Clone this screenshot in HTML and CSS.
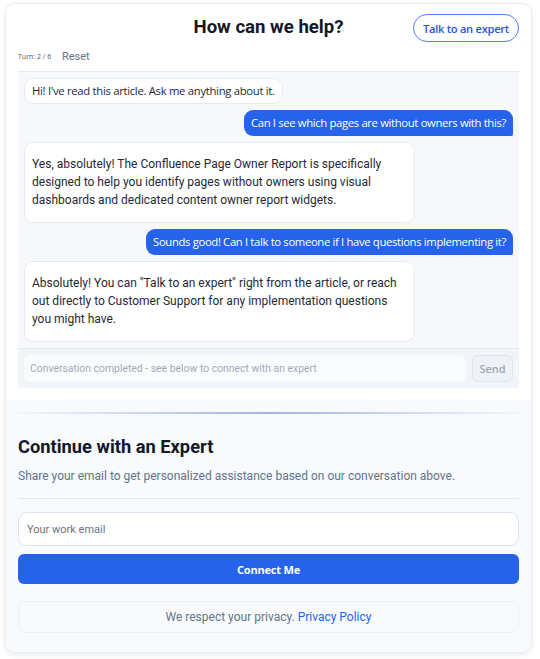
FILE: index.html
```html
<!DOCTYPE html>
<html>
<head>
<meta charset="utf-8">
<link rel="stylesheet" href="styles.css">
</head>
<body>
<div class="card">
  <div class="top">
    <div class="header">
      <h1 class="title">How can we help?</h1>
      <button class="expert-btn">Talk to an expert</button>
    </div>
    <div class="meta">
      <span class="turn">Turn: 2 / 6</span>
      <span class="reset">Reset</span>
    </div>
    <div class="chat">
      <div class="messages">
        <div class="msg bot short">Hi! I've read this article. Ask me anything about it.</div>
        <div class="msg user">Can I see which pages are without owners with this?</div>
        <div class="msg bot long">Yes, absolutely! The Confluence Page Owner Report is specifically designed to help you identify pages without owners using visual dashboards and dedicated content owner report widgets.</div>
        <div class="msg user">Sounds good! Can I talk to someone if I have questions implementing it?</div>
        <div class="msg bot long">Absolutely! You can "Talk to an expert" right from the article, or reach out directly to Customer Support for any implementation questions you might have.</div>
      </div>
      <div class="composer">
        <div class="composer-input">Conversation completed - see below to connect with an expert</div>
        <div class="send">Send</div>
      </div>
    </div>
  </div>
  <div class="bottom">
    <div class="glow-line"></div>
    <h2 class="cta-title">Continue with an Expert</h2>
    <p class="cta-sub">Share your email to get personalized assistance based on our conversation above.</p>
    <div class="divider"></div>
    <div class="email">Your work email</div>
    <button class="connect">Connect Me</button>
    <div class="privacy">We respect your privacy. <span class="link">Privacy Policy</span></div>
  </div>
</div>
</body>
</html>
```

FILE: styles.css
```css
* { box-sizing: border-box; }
html, body { margin: 0; padding: 0; background: #ffffff; }
body {
  font-family: Roboto, "Liberation Sans", sans-serif;
  color: #1e293b;
  padding: 3px 8px 7px 5px;
}
.card {
  width: 527px;
  height: 650px;
  border: 1px solid #e8edf5;
  border-radius: 10px;
  box-shadow: 0 2px 6px rgba(15, 23, 42, 0.08);
  overflow: hidden;
  background: #ffffff;
  display: flex;
  flex-direction: column;
}
.top {
  padding: 10px 12px 12px 12px;
  background: #ffffff;
}
.header {
  position: relative;
  height: 28px;
  display: flex;
  align-items: center;
  justify-content: center;
}
.title {
  margin: 0 0 3px 0;
  font-size: 18.6px;
  font-weight: 700;
  color: #111827;
}
.expert-btn {
  position: absolute;
  right: 0;
  top: 0;
  height: 28px;
  padding: 0 9px;
  border: 1.5px solid #4f83f1;
  border-radius: 14px;
  background: #ffffff;
  color: #2b55d6;
  font-family: "Open Sans", "Noto Sans", sans-serif;
  font-size: 11.2px;
  font-weight: 600;
  letter-spacing: -0.3px;
}
.meta {
  display: flex;
  align-items: center;
  height: 20px;
  margin-top: 4px;
}
.turn {
  font-family: "Open Sans", sans-serif;
  font-size: 7px;
  color: #4b5563;
  width: 44px;
}
.reset {
  font-size: 11px;
  color: #6b7280;
}
.chat {
  margin-top: 5px;
  background: #f7f8fb;
  border-top: 1px solid #e5e9f0;
}
.messages {
  padding: 6px 6px 6px 6px;
  display: flex;
  flex-direction: column;
  gap: 6px;
}
.msg {
  font-size: 12px;
  line-height: 18px;
  max-width: 391px;
}
.bot {
  align-self: flex-start;
  background: #ffffff;
  border: 1px solid #e6eaf1;
  border-radius: 9px;
  color: #1f2937;
}
.bot.short {
  padding: 3px 7px 3px 7px;
  font-family: "Open Sans", "Noto Sans", sans-serif;
  font-size: 11.3px;
  letter-spacing: -0.3px;
}
.bot.long { padding: 12px 7px 13px 7px; }
.user {
  align-self: flex-end;
  max-width: none;
  background: #2563eb;
  color: #ffffff;
  border-radius: 9px 9px 2px 9px;
  padding: 4px 7px 4px 7px;
  font-family: "Open Sans", "Noto Sans", sans-serif;
  font-size: 11.3px;
  letter-spacing: -0.35px;
}
.composer {
  border-top: 1px solid #e5e9f0;
  background: #f1f4f8;
  padding: 6px 6px 6px 6px;
  display: flex;
  gap: 6px;
}
.composer-input {
  flex: 1;
  height: 27px;
  background: #fafbfd;
  border-radius: 6px;
  font-size: 10.4px;
  color: #a3aab6;
  display: flex;
  align-items: center;
  padding-left: 6px;
}
.send {
  width: 41px;
  height: 27px;
  border: 1px solid #e1e5ec;
  border-radius: 6px;
  background: #eef1f5;
  color: #a0a7b3;
  font-family: "Open Sans", "Noto Sans", sans-serif;
  font-weight: 600;
  font-size: 11px;
  display: flex;
  align-items: center;
  justify-content: center;
}
.bottom {
  flex: 1;
  background: #f8fafc;
  padding: 12px 12px 0 12px;
}
.glow-line {
  height: 2px;
  background: linear-gradient(90deg, rgba(147, 170, 235, 0.05), rgba(120, 150, 230, 0.7) 50%, rgba(147, 170, 235, 0.05));
}
.cta-title {
  margin: 22px 0 0 0;
  font-size: 18.3px;
  line-height: 22px;
  font-weight: 700;
  color: #111827;
}
.cta-sub {
  margin: 9px 0 0 0;
  font-size: 12px;
  line-height: 18px;
  color: #64748b;
}
.divider {
  margin-top: 13px;
  height: 1px;
  background: #e2e8f0;
}
.email {
  margin-top: 13px;
  height: 34px;
  border: 1.5px solid #dbe3ef;
  border-radius: 9px;
  background: #ffffff;
  font-size: 11px;
  color: #6b7280;
  display: flex;
  align-items: center;
  padding-left: 8px;
}
.connect {
  display: block;
  width: 100%;
  margin-top: 8px;
  height: 30px;
  border: none;
  border-radius: 6px;
  background: #2563eb;
  color: #ffffff;
  font-family: "Open Sans", "Noto Sans", sans-serif;
  font-size: 11px;
  font-weight: 700;
  letter-spacing: -0.2px;
}
.privacy {
  margin-top: 17px;
  height: 32px;
  border: 1px solid #edf0f5;
  border-radius: 8px;
  display: flex;
  align-items: center;
  justify-content: center;
  font-size: 12px;
  color: #64748b;
  white-space: pre;
}
.link { color: #2563eb; }
```
